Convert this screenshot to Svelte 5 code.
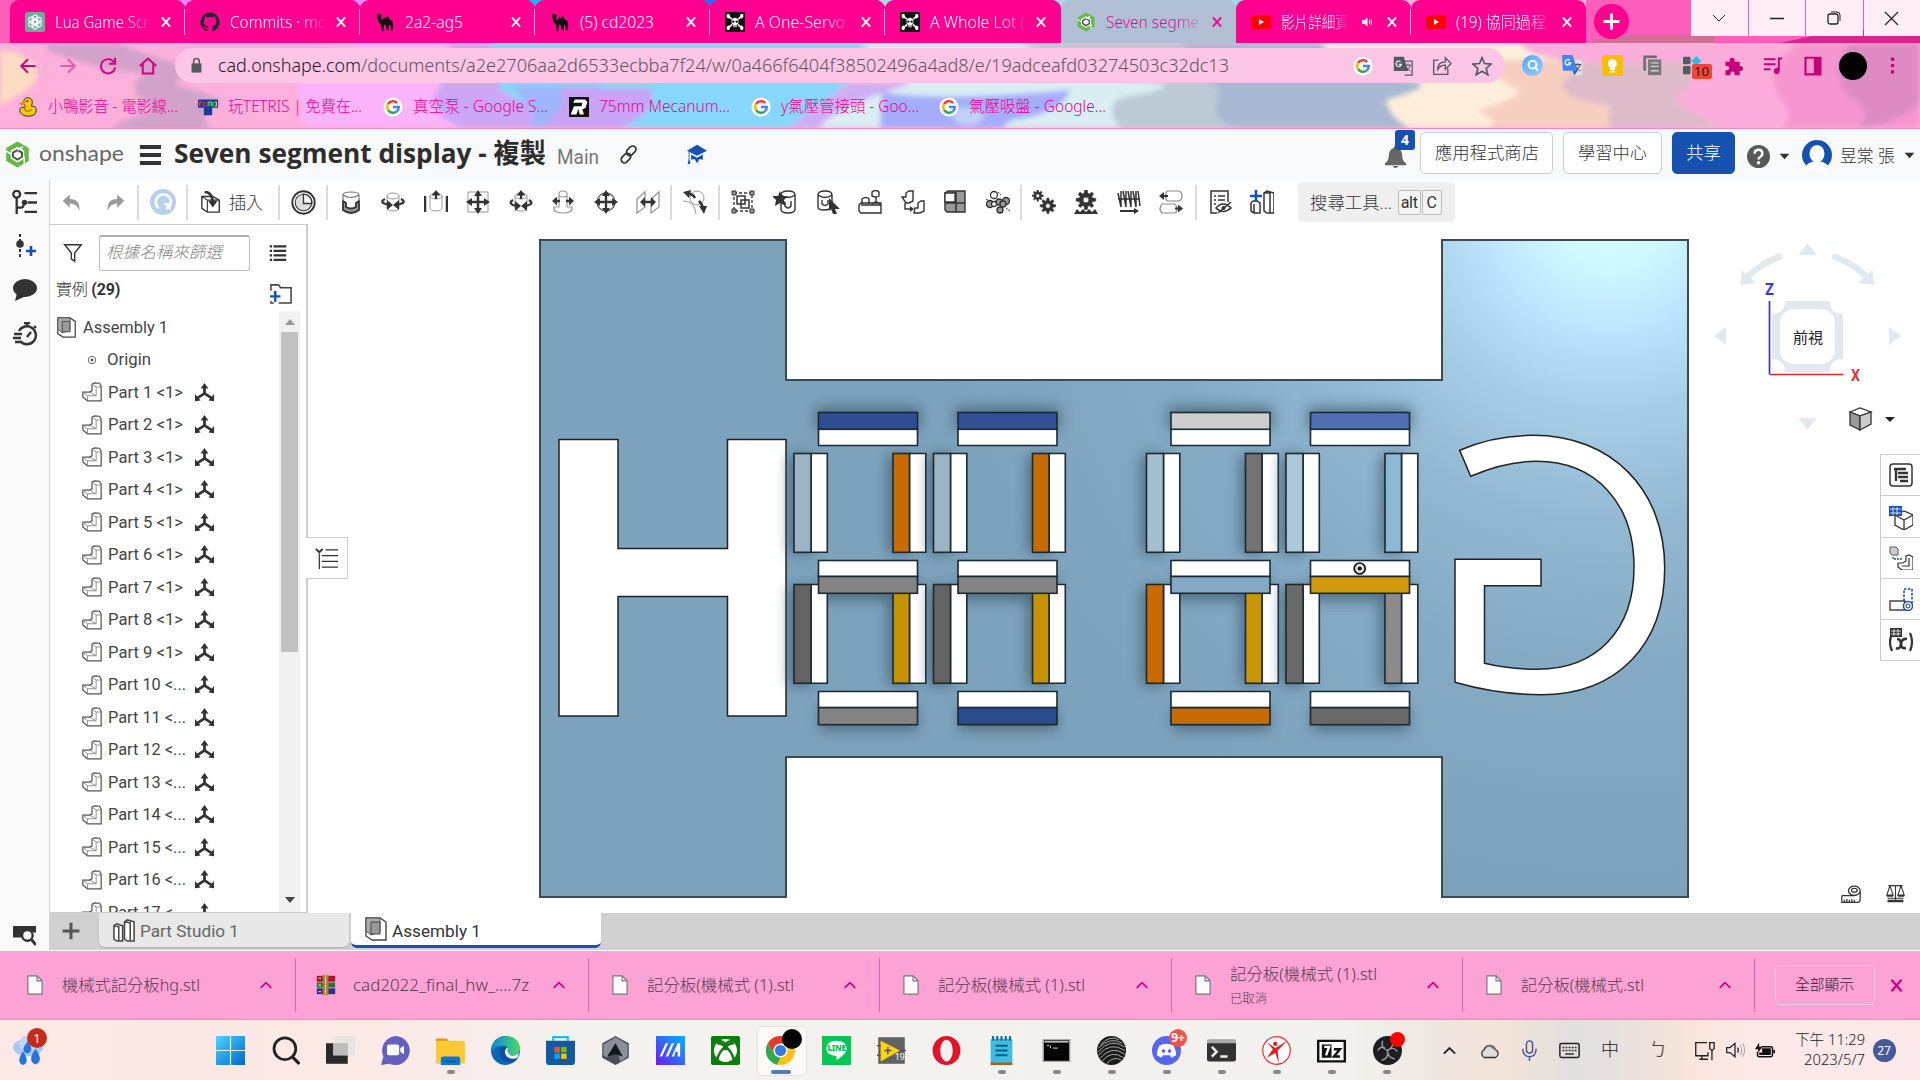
<script>
  const g = '<circle cx="12" cy="12" r="11.5" fill="#fff"/><g fill="none" stroke-width="3"><path d="M17 7.2A7 7 0 0 0 6 8.6" stroke="#ea4335"/><path d="M6 8.6a7 7 0 0 0 0 6.8" stroke="#fbbc05"/><path d="M6 15.4a7 7 0 0 0 10.6 1.8" stroke="#34a853"/><path d="M12 12h7a7 7 0 0 1-2.4 5.2" stroke="#4285f4"/></g>';
  const cyl = '<path d="M6 6v12c0 4 12 4 12 0V6" fill="#fff" stroke="#999"/><ellipse cx="12" cy="6" rx="6" ry="3" fill="#fff" stroke="#999"/>';
  const gear = '<path d="M10.5 0h3l.6 4 2 .8 3-2.200 2.100 2.100-2.200 3 .8 2 4 .6v3l-4 .6-.8 2 2.200 3-2.100 2.100-3-2.200-2 .8-.6 4h-3l-.6-4-2-.8-3 2.200-2.100-2.100 2.200-3-.8-2-4-.6v-3l4-.6.8-2-2.200-3 2.100-2.100 3 2.200 2-.8zM12 8.500a3.500 3.500 0 1 0 0 7 3.500 3.500 0 0 0 0-7z" fill="#333" stroke="#333" stroke-width=".8" fill-rule="evenodd"/>';
  const camel = '<path d="M2 3l4-1 2 2-1 4 2 2 2-5 2 3 2-4 3 5 3 2 1 6-1 5h-2v-5l-2-2-1 7h-2l-1-6-2-1-1 8H8l-1-8-3-3-1-5z" fill="#111"/>';
  const skull = '<path d="M0 0h24v24H0z" fill="#111"/><path d="M4 5l16 14M20 5L4 19" stroke="#fff" stroke-width="1.800"/><path d="M2 3l3-1 1 3-2 3-2-2zM22 3l-3-1-1 3 2 3 2-2zM2 21l3 1 1-3-2-3-2 2zM22 21l-3 1-1-3 2-3 2 2z" fill="#fff"/><path d="M7.500 9q4.500-5 9 0v4.500l-2 1.500v3.500h-5V15l-2-1.500z" fill="#fff" stroke="#111" stroke-width=".8"/><circle cx="10" cy="11.500" r="1.400" fill="#111"/><circle cx="14" cy="11.500" r="1.400" fill="#111"/><path d="M11 16v2M13 16v2" stroke="#111" stroke-width=".8"/>';
  const yt = '<rect y="4" width="24" height="16.500" rx="4" fill="red"/><path d="M9.500 8.500v7l6-3.500z" fill="#fff"/>';
  const shape = '<path d="M12 .5l10 5.700v11.600L12 23.500 2 17.800V6.200z" fill="#63b946"/><path d="M12 5l6 3.500v7L12 19l-6-3.500v-7z" fill="#fff"/><path d="M12 8l4 2.300v3.700L12 16.500 8 14v-3.700z" fill="none" stroke="#555" stroke-width="1.800"/><path d="M2 9l5 3M17 5l-5 3M18 20v-6" stroke="#fff" stroke-width="1.300"/>';
  const part = '<path d="M1 12h8l3-1.500V2.500L15 1l6 .5L23 5v17.500H6.500L1 18z" fill="#fff" stroke="#555" stroke-width="1.500"/><path d="M1 12l5.500 4.500v6M6.500 16.500H17V6h6M12 2.500L17 6M9 12l8 4.500" fill="none" stroke="#888" stroke-width="1.100"/>';
  const asm = '<path d="M2 1h14l6 4v18H8l-6-4z" fill="#fff" stroke="#444" stroke-width="1.400"/><path d="M2 1h14v14l-9 3-5-4z" fill="#aaa" stroke="#555"/><path d="M7 5h9v12H7z" fill="#999" stroke="#444"/>';

  const icons = {
    g, camel, skull, yt, shape, part, asm, gear,
    gpt: '<rect width="24" height="24" rx="3" fill="#74aa9c"/><g fill="none" stroke="#fff" stroke-width="1.300"><ellipse cx="12" cy="9" rx="3.500" ry="5.500"/><ellipse cx="12" cy="9" rx="3.500" ry="5.500" transform="rotate(60 12 12)"/><ellipse cx="12" cy="9" rx="3.500" ry="5.500" transform="rotate(120 12 12)"/><ellipse cx="12" cy="9" rx="3.500" ry="5.500" transform="rotate(180 12 12)"/><ellipse cx="12" cy="9" rx="3.500" ry="5.500" transform="rotate(240 12 12)"/><ellipse cx="12" cy="9" rx="3.500" ry="5.500" transform="rotate(300 12 12)"/></g>',
    github: '<path d="M12 .7a11.500 11.500 0 0 0-3.600 22.400c.6.1.8-.3.8-.6v-2c-3.200.7-3.900-1.500-3.900-1.500-.5-1.300-1.300-1.700-1.300-1.700-1-.7.100-.7.100-.7 1.200.1 1.800 1.200 1.800 1.200 1 1.800 2.700 1.300 3.400 1 .1-.8.4-1.300.7-1.600-2.600-.3-5.300-1.300-5.300-5.700 0-1.300.5-2.300 1.200-3.100-.1-.3-.5-1.500.1-3.100 0 0 1-.3 3.200 1.200a11 11 0 0 1 5.800 0c2.200-1.500 3.200-1.200 3.200-1.200.6 1.600.2 2.800.1 3.100.8.8 1.200 1.800 1.200 3.100 0 4.400-2.700 5.400-5.300 5.700.4.400.8 1.100.8 2.200v3.100c0 .3.200.7.800.6A11.500 11.500 0 0 0 12 .7z" fill="#24292f"/>',
    x: '<path d="M5 4l14 16M19 4L5 20" fill="none" stroke="currentColor" stroke-width="3.200"/>',
    speaker: '<path d="M2 8h5l6-5v18l-6-5H2z" fill="currentColor"/><path d="M17 8v8M20.500 6v12" stroke="currentColor" stroke-width="1.800"/>',
    back: '<path d="M22 12H3M12 3l-9 9 9 9" fill="none" stroke="currentColor" stroke-width="2.600"/>',
    fwd: '<path d="M2 12h19M12 3l9 9-9 9" fill="none" stroke="currentColor" stroke-width="2.600"/>',
    reload: '<path d="M20 7a9.500 9.500 0 1 0 1.500 7M21.500 1v8h-8" fill="none" stroke="currentColor" stroke-width="2.600"/>',
    home: '<path d="M1 12L12 2l11 10M5 9v13h14V9" fill="none" stroke="currentColor" stroke-width="2.600"/>',
    lock: '<path d="M5 9h14v13H5z" fill="#555a60"/><path d="M8 10V6a4 4 0 0 1 8 0v4" fill="none" stroke="#555a60" stroke-width="2.200"/>',
    trans: '<path d="M1 1h12l5 17H1z" fill="#555a60"/><path d="M12 6h11v17H14" fill="none" stroke="#555a60" stroke-width="1.500"/><path d="M9 7a3.200 3.200 0 1 0 1 3H7" fill="none" stroke="#fff" stroke-width="1.400"/><path d="M15 11h7M18 9v2M21 11q-2 5-5 7M16 13q2 4 5 5" fill="none" stroke="#555a60" stroke-width="1.200"/>',
    gtrans: '<path d="M9 6h14v17H13z" fill="#dde1e6"/><path d="M0 0h12l6 18H1z" fill="#4285f4"/><path d="M9 6a3.200 3.200 0 1 0 1 3H7" fill="none" stroke="#fff" stroke-width="1.500"/><path d="M15 11h7M18 9v2M21 11q-2 5-5 7M16 13q2 4 5 5" fill="none" stroke="#555" stroke-width="1.200"/><path d="M12 18h6l-4 5z" fill="#3a56b5"/>',
    share: '<path d="M8 5H2v17h17v-7M7 16q0-9 9-9V2l7 7-7 7v-5q-6 0-9 5z" fill="none" stroke="#555a60" stroke-width="1.600"/>',
    star: '<path d="M12 2l3 7 8 .7-6 5.200 2 7.600-7-4.200-7 4.200 2-7.600-6-5.200L9 9z" fill="none" stroke="#555a60" stroke-width="2"/>',
    mag: '<defs><linearGradient id="mg" x2="1" y2="1"><stop stop-color="#4da9ff"/><stop offset="1" stop-color="#9dcbff"/></linearGradient></defs><circle cx="12" cy="12" r="12" fill="url(#mg)"/><circle cx="12" cy="11" r="4.500" fill="none" stroke="#fff" stroke-width="2.200"/><path d="M15 14l3 4" stroke="#fff" stroke-width="2.200"/>',
    keep: '<rect width="24" height="24" rx="2.500" fill="#fbbc04"/><circle cx="12" cy="10" r="5.200" fill="#fff"/><path d="M9 14h6v3H9zM9 18h6v2H9z" fill="#fff"/>',
    copy: '<path d="M17 2H3v16" fill="none" stroke="#6d6d6d" stroke-width="3"/><path d="M7 5h15v18H7z" fill="#777"/><path d="M10 9h9M10 13h9M10 18h9" stroke="#dcc" stroke-width="1.500"/>',
    grid: '<rect y="1" width="9" height="9" rx="1.500" fill="#555a60"/><rect y="12" width="9" height="10" rx="1.500" fill="#555a60"/><path d="M16 0l6 6-6 6-6-6z" fill="#23bdf2"/>',
    puzzle: '<path d="M3 7h5V5a3 3 0 0 1 6 0v2h6v5h1a3 3 0 0 1 0 6h-1v5h-6v-2a2.500 2.500 0 0 0-5 0v2H3v-6h2a2.500 2.500 0 0 0 0-5H3z" fill="currentColor"/>',
    music: '<path d="M1 4h14M1 10h14M1 16h8M23 3h-4v14" fill="none" stroke="currentColor" stroke-width="2.400"/><circle cx="16.500" cy="18" r="3.500" fill="currentColor"/>',
    panel: '<path d="M3 2h18v20H3z" fill="none" stroke="currentColor" stroke-width="2.500"/><path d="M13 2h8v20h-8z" fill="currentColor"/>',
    dots: '<g fill="currentColor"><circle cx="12" cy="3" r="2.600"/><circle cx="12" cy="12" r="2.600"/><circle cx="12" cy="21" r="2.600"/></g>',
    duck: '<path d="M7 5q1-5 6-4 5 1 4 7l-1 3q6 0 6 4 0 8-9 8-10 0-11-7 0-3 3-4l3 1q2-1 0-3-2-2-1-5z" fill="#f5c800" stroke="#333" stroke-width="1.200"/><path d="M2 7l6-2v4l-5 1z" fill="#f08a00"/><path d="M7 14q4 6 9 1" fill="none" stroke="#a07800" stroke-width="1.500"/><circle cx="11" cy="5" r="1" fill="#111"/>',
    tetris: '<path d="M0 3h24v10h-7v9H7v-9H0z" fill="#173d9b"/><path d="M2 6v5M1 6h4M7 6v5h2M11 6v5" stroke="#f33" stroke-width="1.500"/><path d="M13 11V6h3v5M18 6v5" stroke="#4d4" stroke-width="1.500" fill="none"/><path d="M20 6h2v5h-2" fill="none" stroke="#fc3" stroke-width="1.300"/>',
    rev: '<path d="M0 0h24v24H0z" fill="#111"/><path d="M7 3h12l3 3-2 7-4 2 2 6h-5l-2-7-2 7H2l4-10h9l1-4H5z" fill="#fff"/>',
    link: '<g fill="none" stroke="#333" stroke-width="2"><rect x="9" y="3" width="13" height="8" rx="4" transform="rotate(-45 15 8)"/><rect x="2" y="12" width="13" height="8" rx="4" transform="rotate(-45 8 16)"/></g>',
    cap: '<path d="M0 8l12-7 12 7-12 6z" fill="#1651b0"/><path d="M5 12.500l7 4 7-4V19l-4-1-3 5-3-5-4 1zM2 9v9l-1 6h3l-1-6V9" fill="#1651b0"/>',
    bell: '<path d="M12 1q2 0 2 2 5 2 5 8 0 6 4 8v2H1v-2q4-2 4-8 0-6 5-8 0-2 2-2zM9 22h6q-1 2-3 2t-3-2z" fill="#666"/>',
    help: '<circle cx="12" cy="12" r="12" fill="#595959"/><path d="M8 9q0-4 4-4t4 4q0 2-2 3.300-2 1.200-2 2.700" fill="none" stroke="#fff" stroke-width="2.600"/><circle cx="12" cy="18.500" r="1.800" fill="#fff"/>',
    user: '<circle cx="12" cy="12" r="12" fill="#1651b0"/><ellipse cx="12" cy="11" rx="6" ry="7" fill="#fff"/><path d="M2 24q1-7 10-7t10 7z" fill="#fff"/>',
    caret: '<path d="M3 7h18l-9 10z" fill="#333"/>',
    feature: '<g fill="none" stroke="#333" stroke-width="2.200"><circle cx="4.500" cy="4" r="3.300"/><path d="M4.500 7v16M4.500 17h4q3 0 3-5M12 3h12M15 12h9M12 21h12"/></g><circle cx="12" cy="12" r="2.600" fill="#333"/>',
    addnode: '<path d="M7 0v24" stroke="#333" stroke-width="2" stroke-dasharray="3 2"/><circle cx="7" cy="10" r="3.800" fill="#333"/><path d="M13 17h10M18 12v10" stroke="#1651b0" stroke-width="2.600"/>',
    chat: '<ellipse cx="12" cy="10" rx="12" ry="9" fill="#333"/><path d="M4 15l-2 8 11-5z" fill="#333"/>',
    timer: '<g fill="none" stroke="#333" stroke-width="2.400"><path d="M6 9a9 9 0 1 1 1 10M11 1h6M14 1v4M21 4l2 2M1 12h8M0 16h8M2 20h7M14 15l4-5"/></g>',
    find: '<path d="M0 3h24v7h-3q-3-4-8-2-4 2-4 7H0z" fill="#333"/><circle cx="15" cy="13" r="5.500" fill="none" stroke="#333" stroke-width="2.400"/><path d="M19 17l5 6" stroke="#333" stroke-width="3"/>',
    undo: '<path d="M10 3v5q12 0 11 13-3-8-11-8v5L2 10z" fill="#999"/>',
    redo: '<path d="M14 3v5Q2 8 3 21q3-8 11-8v5l8-8z" fill="#999"/>',
    sync: '<circle cx="12" cy="12" r="12" fill="#b9d0ea"/><path d="M8 17.500a7 7 0 1 1 7 1" fill="none" stroke="#fff" stroke-width="2.200"/><path d="M12 13h7v7z" fill="#fff"/>',
    insert: '<path d="M2 6h12l7 4v13H8l-6-4z" fill="#fff" stroke="#333" stroke-width="1.500"/><path d="M8 10h13M8 10v13M2 6l6 4" fill="none" stroke="#333" stroke-width="1.200"/><path d="M5 1q8 0 9 11" fill="none" stroke="#333" stroke-width="2.800"/><path d="M9 11h10l-5 7z" fill="#333"/>',
    clock: '<circle cx="12" cy="12" r="10.800" fill="#fff" stroke="#333" stroke-width="1.800"/><circle cx="12" cy="12" r="8" fill="#ddd" stroke="#333"/><path d="M12 4v9h8a8 8 0 0 0-8-9z" fill="#fff" stroke="#333" stroke-width="1.300"/>',
    mate1: '<path d="M4 11l3 2v4q5 3 10 0v-4l3-2v9q-8 6-16 0z" fill="#999" stroke="#333" stroke-width="1.800"/><path d="M4 11V5q0-3 8-3t8 3v6M4 5q8 5 16 0" fill="none" stroke="#777" stroke-width="1.200"/>',
    mate2: cyl + '<path d="M4 9Q0 11 2 13l6 2M20 9q4 2 2 4l-6 2" fill="none" stroke="#333" stroke-width="2.300"/><path d="M6 10l6 5-6 5zM18 10l-6 5 6 5z" fill="#333"/>',
    mate3: cyl + '<path d="M1 6v16M23 6v16" stroke="#333" stroke-width="2.500"/><path d="M12 9V3" stroke="#333" stroke-width="2.300"/><path d="M7.500 5.500L12 0l4.500 5.500z" fill="#333"/>',
    mate4: '<path d="M2 2h20v20H2z" fill="none" stroke="#999"/><path d="M12 3v18M3 12h18" stroke="#333" stroke-width="2.500"/><path d="M8 6l4-6 4 6zM8 18l4 6 4-6zM6 8l-6 4 6 4zM18 8l6 4-6 4z" fill="#333"/>',
    mate5: cyl + '<path d="M4 10q-5 3 0 5l4 1M20 10q5 3 0 5l-4 1M12 9V3" fill="none" stroke="#333" stroke-width="2.300"/><path d="M6 11l6 5-6 5zM18 11l-6 5 6 5zM7.500 5.500L12 0l4.500 5.500z" fill="#333"/>',
    mate6: '<path d="M8 4v13H3q-1 6 9 6t9-6h-5V4q0-3-4-3T8 4zM8 6q4 2 8 0" fill="#fff" stroke="#999" stroke-width="1.200"/><path d="M3 11h6M15 11h6" stroke="#333" stroke-width="2.500"/><path d="M6 6.500l-5 4.500 5 4.500zM18 6.500l5 4.500-5 4.500z" fill="#333"/>',
    mate7: '<circle cx="12" cy="12" r="9" fill="none" stroke="#555" stroke-width="1.300"/><path d="M12 2v20M2 12h20" stroke="#333" stroke-width="2.300"/><path d="M8 6l4-6 4 6zM8 18l4 6 4-6zM6 8l-6 4 6 4zM18 8l6 4-6 4z" fill="#333"/>',
    mate8: '<path d="M1 9l8-7v15l-8 6zM15 9l8-7v15l-8 6z" fill="#fff" stroke="#999" stroke-width="1.300"/><path d="M6 12h12" stroke="#333" stroke-width="2.500"/><path d="M9 7l-5 5 5 5zM15 7l5 5-5 5z" fill="#333"/>',
    tan: '<circle cx="14" cy="8" r="7" fill="none" stroke="#999"/><path d="M0 11q12 0 13 13" fill="none" stroke="#999"/><path d="M4 3q6 1 8 5M16 11q4 4 4 8" fill="none" stroke="#333" stroke-width="2.500"/><path d="M0 2l8-2-2 8zM24 16l-8 0 5 8z" fill="#333"/>',
    group: '<path d="M3 3h18v18H3z" fill="none" stroke="#333" stroke-width="1.300" stroke-dasharray="3 2"/><path d="M1 1h4v4H1zM19 1h4v4h-4zM1 19h4v4H1zM19 19h4v4h-4z" fill="#999" stroke="#333"/><path d="M10 10h8v8h-8zM6 6h8v8H6z" fill="#fff" stroke="#333" stroke-width="1.500"/>',
    favmate: '<path d="M8 5v14q0 4 7 4t7-4V5q0-4-7-4T8 5zM8 5q7 5 14 0M12 12v4q3 4 6 0v-5" fill="#fff" stroke="#333" stroke-width="1.400"/><path d="M7 1l2 5 6 0-4 4 2 6-6-3-5 3 1-6-4-4 6 0z" fill="#333"/>',
    selmate: '<path d="M2 5v12q0 3 6 3t8-3V5q0-4-7-4T2 5zM2 5q7 5 14 0M6 10v4q3 3 6 0v-4" fill="#fff" stroke="#333" stroke-width="1.400"/><path d="M13 8l11 11h-5l2 5h-4l-2-5-2 2z" fill="#333"/>',
    fixt: '<path d="M1 15l2-2h20v10H3l-2-2zM3 15h20M4 14V9q4-3 7 0v5M14 14q4-4 8 0M18 12V7M14 6V2q4-3 7 0v4q-3 2-7 0z" fill="#fff" stroke="#333" stroke-width="1.400"/>',
    repl: '<path d="M1 7h4V3l3-2h4v10l-4 2H5zM14 18h3v-5l3-2h3v10l-4 2h-6z" fill="#fff" stroke="#333" stroke-width="1.400"/><path d="M4 13v6h6" fill="none" stroke="#333" stroke-width="1.400"/><path d="M9 16l4 3-4 3z" fill="#333"/>',
    blocks: '<path d="M2 3l3-2h17v21H4l-2-2z" fill="#999" stroke="#333" stroke-width="1.400"/><path d="M2 3h10v9H2z" fill="#fff" stroke="#333" stroke-width="1.300"/><path d="M13 2v20M2 13h20" stroke="#333" stroke-width="1.500"/>',
    chain: '<g fill="#999" stroke="#333" stroke-width="1.300"><circle cx="4" cy="14" r="3.500"/><circle cx="14" cy="20" r="3"/><circle cx="20" cy="11" r="3.500"/><circle cx="8" cy="5" r="3.500" fill="#fff"/><circle cx="13" cy="12" r="3"/><circle cx="8" cy="14" r="2.500" fill="#fff"/><circle cx="17" cy="14" r="3"/></g><path d="M0 9l5 3M20 18l4 3M12 2l3 3" stroke="#333" stroke-dasharray="2 1"/>',
    gears: '<g transform="translate(0 0) scale(.48)">' + gear + '</g><g transform="translate(8 8) scale(.66)">' + gear + '</g>',
    gearrack: '<g transform="translate(2 0) scale(.83)">' + gear + '</g><path d="M0 24l3-5 3 3 3-3 3 3 3-3 3 3 3-3 3 5z" fill="#333"/>',
    screw: '<path d="M1 3l3 14M6 1l3 16M11 1l3 16M16 1l3 16M21 1l2 15M4 1v16M9 1v16M14 1v16M19 1v16M1 9h22" fill="none" stroke="#333" stroke-width="1.500"/><path d="M3 21h14" stroke="#333" stroke-width="2"/><path d="M17 18l5 3-5 3z" fill="#333"/>',
    rel: '<path d="M8 1h12q3 1 3 5t-3 5H8q-3-5 0-10zM3 14h12q3 1 3 5t-3 4H3q-4-4 0-9z" fill="#fff" stroke="#888" stroke-width="1.200"/><path d="M4 6h5M16 18.500h5" stroke="#333" stroke-width="2"/><path d="M5 2v8L0 6zM19 14.500v8l5-4z" fill="#333"/>',
    hide: '<path d="M20 12V1H3v22h6M6 6h2M10 6h7M6 10h2M10 10h7M6 14h2" fill="none" stroke="#333" stroke-width="1.500"/><path d="M8 18q7-8 15 0-8 7-15 0zM10 23L23 12" fill="none" stroke="#333" stroke-width="1.600"/><circle cx="15.500" cy="18" r="2" fill="#333"/>',
    stud2: '<path d="M1 13v8l3 2h6V13l-3-2H3zM4 14v9M14 3l3-2 7 2v20h-7l-3-2zM14 3h6v20" fill="#fff" stroke="#333" stroke-width="1.500"/><path d="M0 6h12M6 0v12" stroke="#1651b0" stroke-width="2.600"/>',
    studio: '<path d="M1 7l3-2 6 2v16H4l-3-2zM1 7l5 1v15M12 3l3-2 7 2v20h-7l-3-2zM12 3l6 1v19" fill="#fff" stroke="#444" stroke-width="1.600"/>',
    funnel: '<path d="M2 2h20l-8 10v10l-4-3v-7z" fill="none" stroke="#333" stroke-width="1.700"/>',
    list: '<path d="M1 3h3M6 3h17M1 9h3M6 9h17M1 15h3M6 15h17M1 21h3M6 21h17" stroke="#333" stroke-width="3"/>',
    folder: '<path d="M2 9V3h8l2 3h11v16H10M2 20v2h3" fill="none" stroke="#444" stroke-width="1.600"/><path d="M1 15h11M6.500 9.500v11" stroke="#1651b0" stroke-width="2.600"/>',
    origin: '<circle cx="12" cy="12" r="9" fill="none" stroke="#555" stroke-width="2.200"/><circle cx="12" cy="12" r="3.500" fill="#555"/>',
    tri: '<path d="M12 4v10M12 13l-9 6M12 13l9 6" stroke="#333" stroke-width="3.500"/><path d="M7 7l5-7 5 7zM0 23V14l7 8zM24 23V14l-7 8z" fill="#333"/>',
    expand: '<path d="M11 3h13M7 9h17M7 15h17M7 21h17M4.500 7v16" stroke="#333" stroke-width="1.300"/><path d="M1 2l3.500 3.500L8 2" fill="none" stroke="#333" stroke-width="2"/>',
    plus: '<path d="M12 2v20M2 12h20" stroke="currentColor" stroke-width="3.600"/>',
    r1: '<rect x="1" y="1" width="22" height="22" rx="3" fill="none" stroke="#333" stroke-width="1.500"/><path d="M5 6h12M7 6v12M9 10h10M9 14h10M11 18h8" stroke="#333" stroke-width="2.400"/>',
    r2: '<path d="M6 9l9-4 9 4v10l-9 5-9-5zM6 9l9 5 9-5M15 14v10" fill="#fff" stroke="#333" stroke-width="1.300"/><path d="M0 0h13v10H0z" fill="#1651b0"/><path d="M1 3h11M1 7h11M4 1v8M8 1v8" stroke="#c9dcf5"/>',
    r3: '<path d="M1 1h6l2 2v6H3L1 7z" fill="#ccc" stroke="#555"/><path d="M4 11v2h9" fill="none" stroke="#1651b0" stroke-width="1.300" stroke-dasharray="2 1"/><path d="M9 17h5l3-2V10l3-1 4 2v13H13l-4-3zM13 20h7V12" fill="#fff" stroke="#333" stroke-width="1.200"/>',
    r4: '<path d="M15 14V2h8v17" fill="none" stroke="#1651b0" stroke-width="1.600" stroke-dasharray="2.500 1.500"/><path d="M1 14h15v9H1z" fill="#fff" stroke="#444" stroke-width="1.400"/><circle cx="19" cy="19" r="4.500" fill="#fff" stroke="#1651b0" stroke-width="1.500"/><circle cx="19" cy="19" r="2" fill="none" stroke="#333"/>',
    r5: '<path d="M3 6q-4 8 0 17M21 5q4 9 0 18" fill="none" stroke="#333" stroke-width="2.200"/><path d="M7 20q4 2 5-4t6-5M8 11q4 0 4 5t5 4" fill="none" stroke="#333" stroke-width="2.600"/><path d="M1 0h12v9H1z" fill="#333"/><path d="M2 3h10M2 6h10M5 1v7M9 1v7" stroke="#fff" stroke-width=".8"/>',
    file: '<path d="M3.500 1h11l6 6v16h-17z" fill="#fafafa" stroke="#777" stroke-width="1.400"/><path d="M14.500 1v6h6" fill="none" stroke="#777" stroke-width="1.400"/>',
    rar: '<path d="M1 1h22v7H1z" fill="#a31528"/><path d="M1 9h22v6H1z" fill="#1c7a2c"/><path d="M1 16h22v7H1z" fill="#2b2e94"/><path d="M8 0h7v24H8z" fill="#b07830"/><path d="M11.500 0v24" stroke="#eec" stroke-width="1.500" stroke-dasharray="2 1"/><path d="M3 4h3M3 12h3M3 20h3" stroke="#dfdf80" stroke-width="1.500"/>',
    up: '<path d="M3 17l9-9 9 9" fill="none" stroke="currentColor" stroke-width="3"/>',
    weather: '<ellipse cx="12" cy="10" rx="12" ry="7" fill="#a9c8f2"/><circle cx="12" cy="7" r="7" fill="#bcd5f8"/><path d="M12 5q-7 8-.5 10 6-2 .5-10zM8 13q-6 9 0 11 6-2 0-11zM18 11q-7 10 0 12.500 7-2.500 0-12.500z" fill="#2774dc"/>',
    win: '<defs><linearGradient id="wg" x2="1" y2="1"><stop stop-color="#4fd4ff"/><stop offset="1" stop-color="#0068c9"/></linearGradient></defs><path d="M0 0h11.500v11.500H0zM12.500 0H24v11.500H12.500zM0 12.500h11.500V24H0zM12.500 12.500H24V24H12.500z" fill="url(#wg)"/>',
    search: '<circle cx="11.500" cy="10.500" r="9" fill="none" stroke="#222" stroke-width="2.300"/><path d="M17.500 17l6 6" stroke="#222" stroke-width="2.600"/>',
    task: '<path d="M0 6h18v17H0z" fill="#2a2a2a"/><path d="M6 0h18v16H6z" fill="#e4e4e4" opacity=".88"/><path d="M6 6h12v10H6z" fill="#bcbcbc"/>',
    meet: '<path d="M12 0a12 12 0 1 1-5 23l-7 1 2-7A12 12 0 0 1 12 0z" fill="#6460bd"/><rect x="5" y="7" width="10" height="9" rx="1.500" fill="#fff"/><path d="M16 10l3-2v7l-3-2z" fill="#fff"/>',
    folderw: '<path d="M0 2h9l3 4H0z" fill="#d99a09"/><rect y="4" width="24" height="19" rx="1.500" fill="#fdc936"/><path d="M4 24v-5q0-2 2-2h12q2 0 2 2v5z" fill="#1276cf"/><path d="M7 21h10" stroke="#0a4a8a"/>',
    edge: '<defs><linearGradient id="eg" x2="1"><stop stop-color="#0c8bd8"/><stop offset="1" stop-color="#4dd964"/></linearGradient></defs><circle cx="12" cy="12" r="12" fill="#0c66b8"/><path d="M1 8Q5 0 13 0q11 1 11 11-1 5-7 5-4 0-3-4 0-4-5-4-6 0-8 5z" fill="url(#eg)"/><path d="M9 9q-4 5 0 10 4 4 10 2l3-3q-5 2-9-1-4-4 0-8-2-1-4 0z" fill="#0f4f9f"/><path d="M13 10q-3 3 0 7 4 3 9 1l1-4q-5 4-8 1-2-2-1-5z" fill="#f4f0ee"/>',
    store: '<path d="M6 4V1h12v3" fill="none" stroke="#29b8ec" stroke-width="1.800"/><path d="M0 4h24v17q0 3-3 3H3q-3 0-3-3z" fill="#12599d"/><path d="M7 9h4.500v4.500H7z" fill="#f25022"/><path d="M12.500 9H17v4.500h-4.500z" fill="#7fba00"/><path d="M7 14.500h4.500V19H7z" fill="#00a4ef"/><path d="M12.500 14.500H17V19h-4.500z" fill="#ffb900"/>',
    armoury: '<path d="M12 0l11 6v12l-11 6L1 18V6z" fill="#4a4e55"/><path d="M12 1l10 6v10l-6 4-4-14-7 11-3-2V7z" fill="#8b9098"/><path d="M12 6l6 11-6-2-7 2z" fill="#16181b"/>',
    myasus: '<defs><linearGradient id="ag" x1="0" y1="1" x2="1" y2="0"><stop stop-color="#6b1af0"/><stop offset="1" stop-color="#00b4ff"/></linearGradient></defs><path d="M0 0h24v24H0z" fill="url(#ag)"/><path d="M3 17L8 6h2L5 17zM8 17l5-11h2l-5 11zM13 17l5-11h2v11h-2v-4h-2l-1 4z" fill="#fff"/>',
    xbox: '<rect width="24" height="24" rx="1.500" fill="#107c10"/><circle cx="12" cy="12" r="9.500" fill="#fff"/><path d="M6 4q4 0 6 3 2-3 6-3M5 20Q7 12 12 9q5 3 7 11M5 6q5 0 7 4 2-4 7-4" fill="none" stroke="#107c10" stroke-width="2"/>',
    chrome: '<circle cx="12" cy="12" r="12" fill="#fbc116"/><path d="M12 0a12 12 0 0 1 10.400 6H12L6.800 15 1.600 6A12 12 0 0 1 12 0z" fill="#e33b2e"/><path d="M1.600 6l5.200 9 5.200 3-3 5.700A12 12 0 0 1 1.600 6z" fill="#2da94f"/><circle cx="12" cy="12" r="5.800" fill="#fff"/><circle cx="12" cy="12" r="4.600" fill="#3a77e3"/>',
    line: '<path d="M0 0h24v24H0z" fill="#06c755"/><path d="M12 4q8 0 8.500 6.500Q20 15 12 20v-3.500Q4 16 3.500 10.500 4 4 12 4z" fill="#fff"/>',
    labview: '<path d="M1 1h22v22H1z" fill="#606266"/><path d="M3 4v17l16-9z" fill="#ffd400"/><path d="M0 8h3M0 16h3M19 12h5M6 12h6M9 9v6" stroke="#555" stroke-width="1.300"/>',
    opera: '<ellipse cx="12" cy="12" rx="11.500" ry="12" fill="#e3132c"/><ellipse cx="12" cy="12" rx="5.200" ry="9" fill="#f5f1ef"/>',
    notepad: '<rect x="3" y="2" width="18" height="21" rx="1.500" fill="#3fbde0"/><path d="M3 22h18v2H3z" fill="#b05a12"/><path d="M7 8h10M7 12h10M7 16h10" stroke="#0d5f85" stroke-width="1.600"/><path d="M5 0v4M8.500 0v4M12 0v4M15.500 0v4M19 0v4" stroke="#135f80" stroke-width="1.500"/>',
    cmd: '<path d="M1 3h22v18H1z" fill="#050505" stroke="#aaa" stroke-width="1.200"/><path d="M2 4h20v1.500H2z" fill="#bbb"/><path d="M4 8h2M7 8v2M9 10h4" stroke="#ddd" stroke-width=".8"/>',
    sphere: '<circle cx="12" cy="12" r="12" fill="#1c1c1c"/><path d="M3 7q8-8 15-4M1 10q10-10 20-4M1 13q10-12 22-4M1 16q10-12 22-4M2 19q10-12 21-4M4 21q8-10 18-3M8 23q6-7 12-3" fill="none" stroke="#aaa" stroke-width=".8"/>',
    discord: '<circle cx="12" cy="12" r="12" fill="#5865f2"/><path d="M6 8q6-3 12 0 2 4 2 8l-4 2-1-2H9l-1 2-4-2q0-4 2-8z" fill="#fff"/><circle cx="9.500" cy="12.500" r="1.500" fill="#5865f2"/><circle cx="14.500" cy="12.500" r="1.500" fill="#5865f2"/>',
    term: '<rect y="3" width="24" height="18" rx="1.500" fill="#333"/><path d="M0 3h24v3H0z" fill="#aaa"/><path d="M4 9l4 4-4 4M11 17h6" fill="none" stroke="#eee" stroke-width="2"/>',
    gym: '<circle cx="12" cy="12" r="11.400" fill="#fff" stroke="#e33" stroke-width="1"/><path d="M4 5l7 5 10-6-8 8 1 11-3-9-7 4 5-7z" fill="#d22"/><circle cx="11" cy="6.500" r="1.800" fill="#d22"/>',
    zip: '<path d="M1 4h22v17H1z" fill="#fff" stroke="#111" stroke-width="2"/><path d="M4 7h8v11H4z" fill="#111"/><path d="M6 9h4l-2.500 7" fill="none" stroke="#fff" stroke-width="2"/><path d="M14 11h5l-5 6h5" fill="none" stroke="#111" stroke-width="2"/>',
    obs: '<circle cx="12" cy="12" r="12" fill="#1d1d22"/><path d="M12 12q-6-2-4-8M12 12q5-4 8 1M12 12q1 7-5 8M4 12q2-4 6-2M17 5q-1 5-5 7M18 19q-6-1-6-7" fill="none" stroke="#999" stroke-width="1.200"/>',
    cloud: '<path d="M6 20a5 5 0 0 1 0-9 7 7 0 0 1 13 0 5 5 0 0 1 0 9z" fill="#ddd" stroke="#333" stroke-width="1.500"/><path d="M4 12q4-6 9-4l8 6q-2-7-8-9-6 0-9 7z" fill="#777"/>',
    mic: '<rect x="8.500" y="1" width="7" height="14" rx="3.500" fill="none" stroke="#3f4f9e" stroke-width="1.600"/><path d="M4.500 10v2q1 7 7.500 7t7.500-7v-2M12 19v5" fill="none" stroke="#3f4f9e" stroke-width="1.600"/>',
    keys: '<rect x="1" y="4" width="22" height="16" rx="2" fill="none" stroke="#222" stroke-width="1.700"/><path d="M4 8.500h16M4 12h16" stroke="#222" stroke-width="1.800" stroke-dasharray="2 1.500"/><path d="M7 16h10" stroke="#222" stroke-width="1.600"/>',
    monitor: '<path d="M15 3H2v15h14v-4M6 22h10M9 18v4M18 10V3h5v7l-2.500 2zM20.500 12v11" fill="none" stroke="#222" stroke-width="1.500"/>',
    sound: '<path d="M2 9h4l6-5v16l-6-5H2z" fill="none" stroke="#222" stroke-width="1.500"/><path d="M15 9q2 3 0 6" fill="none" stroke="#222" stroke-width="1.500"/><path d="M18 6q4 6 0 12M21 4q5 8 0 16" fill="none" stroke="#aaa" stroke-width="1.300"/>',
    batt: '<path d="M8 8h11q2 0 2 2v8q0 2-2 2H5q-2 0-2-2v-4" fill="none" stroke="#111" stroke-width="1.800"/><path d="M8 10h11v8H5v-3h4z" fill="#111"/><path d="M22 12h2v4h-2zM5 3L0 11h4l-1 5 6-8H5z" fill="#111"/>',
    tape: '<path d="M1 14h10q5 0 8-1M1 14v8h19q3 0 3-4V9M4 19v3M7 18v4M10 19v3M13 18v4M16 19v3" fill="none" stroke="#333" stroke-width="1.500"/><ellipse cx="16" cy="8" rx="7" ry="5.500" fill="#fff" stroke="#333" stroke-width="1.600"/><ellipse cx="16" cy="7.500" rx="3.500" ry="2.300" fill="none" stroke="#333" stroke-width="1.500"/>',
    scale: '<path d="M3 2h18M12 2v18M5 2L1 14h8L5 2M19 2l-4 12h8L19 2M2 18h20" fill="none" stroke="#333" stroke-width="1.400"/><path d="M1 14h8v2H1zM15 14h8v2h-8zM2 20h20v3H2z" fill="#333"/>'
  };

  const tabs = [
    { i: 'gpt', t: 'Lua Game Scr', w: 94, fade: 1 },
    { i: 'github', t: 'Commits · mc', w: 95, fade: 1 },
    { i: 'camel', t: '2a2-ag5', w: 58 },
    { i: 'camel', t: '(5) cd2023', w: 74 },
    { i: 'skull', t: 'A One-Servo', w: 90, fade: 1 },
    { i: 'skull', t: 'A Whole Lot (', w: 95, fade: 1 },
    { i: 'shape', t: 'Seven segme', w: 93, fade: 1, active: true },
    { i: 'yt', t: '影片詳細資', w: 68, fade: 1, audio: true },
    { i: 'yt', t: '(19) 協同過程', w: 90, fade: 1 }
  ];
  const bookmarks = [
    { i: 'duck', t: '小鴨影音 - 電影線...', w: 130 },
    { i: 'tetris', t: '玩TETRIS | 免費在...', w: 134 },
    { i: 'g', t: '真空泵 - Google S...', w: 135 },
    { i: 'rev', t: '75mm Mecanum...', w: 131 },
    { i: 'g', t: 'y氣壓管接頭 - Goo...', w: 138 },
    { i: 'g', t: '氣壓吸盤 - Google...', w: 137 }
  ];
  const tools1 = ['mate1', 'mate2', 'mate3', 'mate4', 'mate5', 'mate6', 'mate7', 'mate8'];
  const tools2 = ['group', 'favmate', 'selmate', 'fixt', 'repl', 'blocks', 'chain'];
  const tools3 = ['gears', 'gearrack', 'screw', 'rel'];
  const parts = Array.from({ length: 17 }, (_, k) => (k < 9 ? `Part ${k + 1} <1>` : `Part ${k + 1} <...`));
  const files = [
    { i: 'file', t: '機械式記分板hg.stl', w: 138 },
    { i: 'rar', t: 'cad2022_final_hw_....7z', w: 176 },
    { i: 'file', t: '記分板(機械式 (1).stl', w: 147 },
    { i: 'file', t: '記分板(機械式 (1).stl', w: 147 },
    { i: 'file', t: '記分板(機械式 (1).stl', w: 147, sub: '已取消' },
    { i: 'file', t: '記分板(機械式.stl', w: 123 }
  ];
  const apps = [
    { i: 'win' }, { i: 'search' }, { i: 'task' }, { i: 'meet' }, { i: 'folderw', run: 1 }, { i: 'edge' }, { i: 'store' },
    { i: 'armoury' }, { i: 'myasus' }, { i: 'xbox' }, { i: 'chrome', on: 1, blob: '#000' }, { i: 'line', label: 'LINE' },
    { i: 'labview', num: '19' }, { i: 'opera' }, { i: 'notepad', run: 1 }, { i: 'cmd', run: 1 }, { i: 'sphere', run: 1 },
    { i: 'discord', run: 1, count: '9+' }, { i: 'term', run: 1 }, { i: 'gym', run: 1 }, { i: 'zip', run: 1 }, { i: 'obs', run: 1, blob: '#f00' }
  ];

  // Digit columns: x offset, then fills for top, upper-left, upper-right, middle, lower-left, lower-right, bottom.
  const digits = [
    { dx: 0, c: ['#2f4d90', '#9bb4c4', '#c76c04', '#848484', '#636363', '#c69103', '#848484'] },
    { dx: 139.500, c: ['#325093', '#9bb4c4', '#c76c04', '#848484', '#636363', '#c69103', '#2c4a8e'] },
    { dx: 352.500, c: ['#cdcdcf', '#a5bfcf', '#737373', '#82aac5', '#c76c04', '#c89505', '#c76c04'] },
    { dx: 492, c: ['#5170b3', '#adc8d8', '#8db8d5', '#d19b0c', '#696969', '#8b8b8b', '#696969'] }
  ];
</script>

{#snippet icon(name, size)}
  <svg class="ic" viewBox="0 0 24 24" width={size} height={size}>{@html icons[name]}</svg>
{/snippet}

{#snippet txt(s, w, size)}
  <svg class="tx" width={w} height={size * 1.4}><text x="0" y={size * 1.06} font-size={size} textLength={w} lengthAdjust="spacingAndGlyphs">{s}</text></svg>
{/snippet}

<div class="screen">
  <header class="chrome">
    <svg class="paper" viewBox="0 0 1920 128" width="1920" height="128">
      <defs><filter id="soft"><feGaussianBlur stdDeviation="2.5" /></filter></defs>
      <path d="M0 0h1920v128H0z" fill="#fdb0dc" />
      <g filter="url(#soft)">
        <path d="M0 50q18 0 32 12 12 12-2 26-14 8-30 18z" fill="#fddcc4" />
        <path d="M47 43h70q50 20 82 25-30 14-20 18 40 10 44 18-30 10-10 26H113q0-8 30-16 14-6-6-18-8-16 10-22-60-6-100-24z" fill="#d3a2ca" />
        <path d="M170 43h160q-20 26-90 20-40-6-70-20z" fill="#f7aadf" />
        <path d="M360 43h160l-20 85H310q-16-10-5-22-20-20 10-36z" fill="#fbb3fa" />
        <path d="M450 43h60l40 85h-90q-40-20-20-40z" fill="#cda6f7" />
        <path d="M490 43h420l-70 45-40 40H560q-20-10-10-20-60-10-50-34z" fill="#87d7fc" />
        <path d="M510 86h90q-20 20-10 42h-60q10-20-20-42z" fill="#9fb6fa" />
        <path d="M560 88h90q10 24-30 40h-80q30-20 20-40z" fill="#c8a3f6" />
        <path d="M848 84h70l-70 44h-60z" fill="#cfadf5" />
        <path d="M860 43h320v85H820q10-20 90-44z" fill="#d9edf3" />
        <path d="M882 92q60 10 188-2-8 24-58 30l-10 8H880z" fill="#a5adfa" />
        <ellipse cx="968" cy="116" rx="16" ry="9" fill="#c3d0fa" />
        <path d="M1020 43h230v85h-130q-16-20 0-30 60-10 40-14-80-10-140-41z" fill="#bccad5" />
        <path d="M1180 43h240v85h-180q-36-4-20-36-20-20-40-49z" fill="#a9b9d3" />
        <path d="M1320 43h240v85h-150q-20-10-24-28 60-16 20-20-60-10-86-37z" fill="#fdeedb" />
        <path d="M1500 60h150v68h-160q10-8-14-18 40-10 44-20-30-10-20-30z" fill="#f7cfc0" />
        <path d="M1600 50h120v78h-110q-4-14 2-22-50-6-50-22 20-20 38-34z" fill="#debbc9" />
        <path d="M1520 43h400v85h-200l-48-28q20-12 30-40-170 10-182-17z" fill="#fcaddb" />
        <path d="M1800 43h120v85h-140q16-12 0-30-20-30 20-55z" fill="#f596d0" />
        <path d="M1850 43h70v60q-20 20-60 25 14-20-12-32-20-24 2-53z" fill="#df8bc3" />
      </g>
      <path d="M0 0h1061v43H0z" fill="#f51295" />
      <path d="M0 0h40v43H0z" fill="#ff5fb9" />
      <path d="M1586 0h334v43h-334z" fill="#fc5eb9" />
      <path d="M1590 43q20-9 50-8h75v8z" fill="#cf7098" />
      <path d="M1780 43l60-13h80v13z" fill="#d9268f" />
      <path d="M178 0h16l-8 7zM353 0h16l-8 7z" fill="#e58bff" />
      <path d="M528 0h16l-8 7z" fill="#1cb5fd" />
      <path d="M703 0h16l-8 7z" fill="#3366ff" />
      <path d="M878 0h16l-8 7zM1054 0h190v12h-190z" fill="#a5d9e8" />
    </svg>
    <div class="strip">
      {#each tabs as t, k}
        <div class="tab" class:active={t.active} class:line={k < 8 && k !== 5 && k !== 6}>
          {@render icon(t.i, 20)}
          <div class="title" class:fade={t.fade} class:short={t.audio}>{@render txt(t.t, t.w, 15.500)}</div>
          {#if t.audio}<span class="audio">{@render icon('speaker', 12)}</span>{/if}
          {@render icon('x', 14)}
        </div>
      {/each}
      <div class="new">{@render icon('plus', 19)}</div>
      <div class="wb">
        <div><svg width="16" height="16"><path d="M2 5l6 6 6-6" fill="none" stroke="#222" /></svg></div>
        <div><svg width="14" height="14"><path d="M0 7.500h14" stroke="#222" stroke-width="1.500" /></svg></div>
        <div><svg width="14" height="14" viewBox="0 0 14 14"><rect x="1" y="3" width="10" height="10" rx="2" fill="none" stroke="#222" stroke-width="1.300" /><path d="M4 1h6q3 0 3 3v6" fill="none" stroke="#222" /></svg></div>
        <div><svg width="15" height="15"><path d="M1 1l13 13M14 1L1 14" stroke="#222" stroke-width="1.200" /></svg></div>
      </div>
    </div>
    <div class="nav">
      <div class="navbtns">
        <span>{@render icon('back', 18)}</span><span class="dim">{@render icon('fwd', 18)}</span><span>{@render icon('reload', 18)}</span><span>{@render icon('home', 18)}</span>
      </div>
      <div class="pill">
        {@render icon('lock', 17)}
        <div class="url"><b>{@render txt('cad.onshape.com', 143, 19)}</b>{@render txt('/documents/a2e2706aa2d6533ecbba7f24/w/0a466f6404f38502496a4ad8/e/19adceafd03274503c32dc13', 868, 19)}</div>
        <div class="pillic">{@render icon('g', 20)}{@render icon('trans', 20)}{@render icon('share', 20)}{@render icon('star', 20)}</div>
      </div>
      <div class="ext">
        {#each ['mag', 'gtrans', 'keep', 'copy'] as e}<span>{@render icon(e, 21)}</span>{/each}
        <span class="cnt">{@render icon('grid', 20)}<i>10</i></span>
        {#each ['puzzle', 'music', 'panel'] as e}<span>{@render icon(e, 20)}</span>{/each}
        <span><em></em></span><span>{@render icon('dots', 17)}</span>
      </div>
    </div>
    <div class="marks">
      {#each bookmarks as b}<div class="mark">{@render icon(b.i, 20)}{@render txt(b.t, b.w, 15.500)}</div>{/each}
    </div>
  </header>

  <div class="apphead">
    <div class="brand">{@render icon('shape', 27)}<span class="onshape">{@render txt('onshape', 85, 22)}</span></div>
    <div class="burger"><i></i><i></i><i></i></div>
    <div class="doc">{@render txt('Seven segment display - 複製', 372, 27.500)}</div>
    <div class="main">{@render txt('Main', 42, 19.500)}</div>
    <div class="lnk">{@render icon('link', 20)}</div>
    <div class="capi">{@render icon('cap', 20)}</div>
    <div class="right">
      <div class="bell">{@render icon('bell', 23)}<b>4</b></div>
      <div class="btn b1">{@render txt('應用程式商店', 104, 17.500)}</div>
      <div class="btn b2">{@render txt('學習中心', 69, 17.500)}</div>
      <div class="btn b3">{@render txt('共享', 35, 17.500)}</div>
      <div class="help">{@render icon('help', 23)}{@render icon('caret', 13)}</div>
      <div class="me">{@render icon('user', 30)}{@render txt('昱棠 張', 55, 17.500)}{@render icon('caret', 13)}</div>
    </div>
  </div>

  <div class="body">
    <aside class="rail">
      <div>{@render icon('feature', 25)}</div><div>{@render icon('addnode', 24)}</div><div>{@render icon('chat', 24)}</div><div>{@render icon('timer', 24)}</div>
      <div class="last">{@render icon('find', 23)}</div>
    </aside>
    <div class="work">
      <div class="tools">
        <div class="cell">{@render icon('undo', 21)}</div><div class="cell redo">{@render icon('redo', 21)}</div><hr />
        <div class="cell s">{@render icon('sync', 26)}</div><hr />
        <div class="ins">{@render icon('insert', 22)}{@render txt('插入', 34, 17.500)}</div><hr />
        <div class="cell s">{@render icon('clock', 25)}</div><hr />
        {#each tools1 as t}<div class="cell">{@render icon(t, 24)}</div>{/each}<hr />
        <div class="cell s">{@render icon('tan', 24)}</div><hr />
        {#each tools2 as t}<div class="cell">{@render icon(t, 24)}</div>{/each}<hr />
        {#each tools3 as t}<div class="cell">{@render icon(t, 24)}</div>{/each}<hr class="wide" />
        <div class="cell">{@render icon('hide', 24)}</div><div class="cell">{@render icon('stud2', 24)}</div>
        <div class="find">{@render txt('搜尋工具...', 82, 17.500)}<kbd>alt</kbd><kbd>C</kbd></div>
      </div>

      <div class="split">
        <section class="tree">
          <div class="filter">
            <span class="fn">{@render icon('funnel', 20)}</span>
            <div class="input">{@render txt('根據名稱來篩選', 116, 16.500)}</div>
            {@render icon('list', 18)}
          </div>
          <div class="inst"><span>實例 <b>(29)</b></span>{@render icon('folder', 23)}</div>
          <div class="scrollbox">
            <div class="rows">
              <div class="row root">{@render icon('asm', 21)}{@render txt('Assembly 1', 85, 16.500)}</div>
              <div class="row org">{@render icon('origin', 10)}{@render txt('Origin', 44, 16.500)}</div>
              {#each parts as p, k}
                <div class="row">{@render icon('part', 20)}{@render txt(p, k < 9 ? 75 : 78, 16.500)}<span class="tri">{@render icon('tri', 19)}</span></div>
              {/each}
            </div>
            <div class="bar"><i class="up"></i><div class="thumb"></div><i class="dn"></i></div>
          </div>
        </section>

        <section class="view">
          <svg class="scene" viewBox="308 225 1612 688" width="1612" height="688">
            <defs>
              <radialGradient id="light" gradientUnits="userSpaceOnUse" cx="1610" cy="205" r="700">
                <stop offset="0" stop-color="#d8ffff" /><stop offset=".09" stop-color="#cef8ff" /><stop offset=".17" stop-color="#bfe6ff" />
                <stop offset=".29" stop-color="#a8cfe8" /><stop offset=".45" stop-color="#93b8d2" /><stop offset=".66" stop-color="#84aac4" /><stop offset="1" stop-color="#7da2bc" />
              </radialGradient>
              <filter id="shade" x="-50%" y="-50%" width="200%" height="200%"><feGaussianBlur stdDeviation="7" /></filter>
            </defs>
            <path d="M540 240H786V380H1442V240H1688V897H1442V757H786V897H540z" fill="url(#light)" stroke="#3c4a54" stroke-width="2" />
            <path d="M559 439.500h59v109h109.500v-109H786V716h-58.500V596.500H618V716h-59z" fill="#fff" stroke="#222" stroke-width="1.500" />
            {#each digits as d}
              <g transform="translate({d.dx} 0)">
                <g filter="url(#shade)" fill="#34505f" opacity=".65">
                  <path d="M816 407h104v22H816zM789 455h24v98h-24zM888 455h24v98h-24zM789 587h24v98h-24zM888 587h24v98h-24zM820 578h97v22h-97zM820 708h97v22h-97z" />
                </g>
                <g stroke="#1c2930" stroke-width="1.600" fill="#fff">
                  <path d="M818.500 429h99v16.500h-99zM811 453.500h16.300v98.800H811zM909.500 453.500h16.300v98.800h-16.300zM811 584.500h16.300v98.800H811zM909.500 584.500h16.300v98.800h-16.300zM818.500 691.500h99v16h-99z" />
                  <rect x="818.500" y="412.500" width="99" height="16.800" fill={d.c[0]} />
                  <rect x="794" y="453.500" width="17" height="98.800" fill={d.c[1]} />
                  <rect x="893" y="453.500" width="16.500" height="98.800" fill={d.c[2]} />
                  <rect x="794" y="584.500" width="17" height="98.800" fill={d.c[4]} />
                  <rect x="893" y="584.500" width="16.500" height="98.800" fill={d.c[5]} />
                  <rect x="818.500" y="560.500" width="99" height="16" />
                  <rect x="818.500" y="576.500" width="99" height="16.800" fill={d.c[3]} />
                  <rect x="818.500" y="707.700" width="99" height="17" fill={d.c[6]} />
                </g>
              </g>
            {/each}
            <circle cx="1359.700" cy="568.500" r="5.500" fill="#ddd" stroke="#111" stroke-width="1.700" /><circle cx="1359.700" cy="568.500" r="2" fill="#111" />
            <path d="M1459.700 450.300C1482 440.500 1508 435.300 1533 435.300C1612 435.300 1664.700 490 1664.700 568C1664.700 645 1617 694.700 1541 694.700C1510 694.700 1480 689.500 1455 682.300V559.300H1541V585.700H1484.500V663.300C1501 667.300 1519 669.300 1537 669.300C1597 669.300 1634 630 1634 567C1634 503 1596 461.300 1536 461.300C1513 461.300 1492 467 1470.700 476.300Z" fill="#fff" stroke="#222" stroke-width="1.500" />

            <g fill="#e1e9ef">
              <path d="M1807.500 243l9 12h-18zM1807.500 430l9-12h-18zM1714 336l12-9v18zM1901 336l-12-9v18z" />
              <path d="M1785 301h45q0 13 13 13v45q-13 0-13 13h-45q0-13-13-13v-45q13 0 13-13z" />
              <path d="M1740 285l2-15 4 4q16-15 35-21l2 6q-18 6-32 19l5 5zM1874.500 285l-2-15-4 4q-16-15-35-21l-2 6q18 6 32 19l-5 5z" />
            </g>
            <rect x="1780" y="309" width="55" height="55" rx="14" fill="#fff" />
            <path d="M1769.500 301v73" stroke="#3b35c9" stroke-width="1.700" /><path d="M1769.500 374.500h74" stroke="#e0262c" stroke-width="1.700" />
            <text x="1765" y="295" font-size="17" textLength="9" lengthAdjust="spacingAndGlyphs" fill="#3b35e0" font-weight="bold">Z</text>
            <text x="1851" y="381" font-size="17" textLength="9" lengthAdjust="spacingAndGlyphs" fill="#e0353a" font-weight="bold">X</text>
            <text x="1793" y="343" font-size="15" textLength="30" lengthAdjust="spacingAndGlyphs" fill="#222">前視</text>
            <g stroke="#333" stroke-width="1.300"><path d="M1850 412l10-4 11 4-11 4z" fill="#fff" /><path d="M1850 412l10 4v14l-10-5z" fill="#999" /><path d="M1871 412l-11 4v14l11-6z" fill="#ccc" /></g>
            <path d="M1885 417h10l-5 5z" fill="#222" />
          </svg>
          <div class="toggle">{@render icon('expand', 23)}</div>
          <div class="side">{#each ['r1', 'r2', 'r3', 'r4', 'r5'] as r}<div>{@render icon(r, 24)}</div>{/each}</div>
          <div class="measure">{@render icon('tape', 20)}{@render icon('scale', 19)}</div>
        </section>
      </div>

      <div class="sheets">
        <div class="add">{@render icon('plus', 20)}</div>
        <div class="sheet">{@render icon('studio', 23)}{@render txt('Part Studio 1', 99, 16.500)}</div>
        <div class="sheet on">{@render icon('asm', 24)}{@render txt('Assembly 1', 89, 16.500)}</div>
      </div>
    </div>
  </div>

  <div class="dl">
    {#each files as f}
      <div class="file">
        <span class="fi">{@render icon(f.i, 20)}</span>
        <div class="fname">{@render txt(f.t, f.w, 16)}{#if f.sub}<small>{@render txt(f.sub, 37, 12.500)}</small>{/if}</div>
        {@render icon('up', 14)}
      </div>
    {/each}
    <div class="all">{@render txt('全部顯示', 59, 14.500)}</div>
    <span class="dx">{@render icon('x', 17)}</span>
  </div>

  <footer class="task">
    <div class="wx">{@render icon('weather', 30)}<b>1</b></div>
    <div class="apps">
      {#each apps as a}
        <div class="app" class:run={a.run} class:on={a.on}>
          {@render icon(a.i, 29)}
          {#if a.blob}<i class="blob" style:background={a.blob}></i>{/if}
          {#if a.count}<b class="count">{a.count}</b>{/if}
          {#if a.label}<b class="lab">{a.label}</b>{/if}
          {#if a.num}<b class="num">{a.num}</b>{/if}
        </div>
      {/each}
    </div>
    <div class="tray">
      <span>{@render icon('up', 15)}</span><span>{@render icon('cloud', 21)}</span><span>{@render icon('mic', 21)}</span><span>{@render icon('keys', 21)}</span>
      <span>{@render txt('中', 18, 18)}</span><span class="zy">{@render txt('ㄅ', 18, 18)}</span>
      <span class="n">{@render icon('monitor', 21)}</span><span class="n">{@render icon('sound', 20)}</span><span class="n">{@render icon('batt', 20)}</span>
    </div>
    <div class="when">{@render txt('下午 11:29', 70, 14.500)}{@render txt('2023/5/7', 61, 14.500)}</div>
    <b class="note">27</b>
  </footer>
</div>

<style>
  :global(body) { background: #fff; overflow: hidden; }
  * { box-sizing: border-box; }
  .screen { width: 1920px; height: 1080px; display: flex; flex-direction: column; overflow: hidden; font-family: 'Noto Sans', 'Noto Sans CJK TC', sans-serif; color: #333; }
  .ic, .tx { flex: none; display: block; }
  .tx { overflow: visible; }
  .tx text { fill: currentColor; }

  .chrome { height: 129px; flex: none; position: relative; border-bottom: 1px solid #f585c8; }
  .paper { position: absolute; left: 0; top: 0; }
  .strip { height: 43px; display: flex; padding-left: 10px; position: relative; }
  .tab { width: 175.100px; flex: none; display: flex; align-items: center; background: #ff0090; color: #fff; padding-left: 15px; border-radius: 9px 9px 0 0; position: relative; }
  .tab.active { background: #b0bfd4; color: #f0058e; }
  .tab.line::after { content: ''; position: absolute; right: 0; top: 9px; height: 26px; width: 1px; background: #ffb3dc; }
  .title { width: 98px; margin: 2px 6px 0 10px; font-weight: 300; }
  .title.short { width: 68px; }
  .fade { mask-image: linear-gradient(90deg, #000 72%, #0000); }
  .audio { margin: 0 12px 0 6px; }
  .new { width: 35px; height: 35px; border-radius: 50%; background: #ff0090; color: #fff; display: grid; place-items: center; margin: 4px 0 0 8px; }
  .new + .wb { margin-left: auto; }
  .wb { display: flex; gap: 1px; width: 229px; height: 36px; }
  .wb div { flex: 1; background: #ffeef8; display: grid; place-items: center; }
  .nav { height: 45px; display: flex; align-items: center; position: relative; }
  .navbtns { display: flex; width: 175px; padding-left: 7.500px; color: #d4007f; }
  .navbtns span { width: 40px; display: grid; place-items: center; }
  .navbtns .dim { color: #e25eac; }
  .pill { width: 1330px; height: 35px; border-radius: 18px; background: #fdc6e6; display: flex; align-items: center; padding: 0 13px; }
  .url { display: flex; color: #5e5660; margin-left: 13px; font-weight: 300; }
  .url b { color: #1d1a20; font-weight: 300; }
  .pillic { display: flex; gap: 19.700px; margin-left: auto; }
  .ext { display: flex; padding-left: 7.500px; color: #c80078; }
  .ext span { width: 40px; display: grid; place-items: center; position: relative; }
  .ext em { width: 28px; height: 28px; border-radius: 50%; background: #000; }
  .cnt i { position: absolute; left: 19px; top: 12px; width: 20px; height: 15px; border-radius: 2px; background: #f1433c; color: #222; font: 13px/15px 'Noto Sans', sans-serif; text-align: center; }
  .marks { height: 40px; display: flex; align-items: center; gap: 20.800px; padding: 0 0 3px 17.500px; color: #ee0090; position: relative; font-weight: 300; }
  .mark { display: flex; align-items: center; gap: 10px; }
  .mark .tx { margin-top: 1px; }

  .apphead { height: 51px; flex: none; background: #f8f9fb; display: flex; align-items: center; }
  .brand { display: flex; align-items: center; gap: 8px; width: 140px; padding-left: 4px; color: #666; }
  .onshape { font-family: Lato, sans-serif; margin-top: -2px; }
  .burger { width: 34px; display: flex; flex-direction: column; gap: 4px; }
  .burger i { width: 21px; height: 4px; background: #333; }
  .doc { width: 383px; font-weight: 700; color: #2e2e2e; font-family: 'Open Sans', 'Noto Sans CJK TC', sans-serif; margin-top: -2px; }
  .main { width: 62px; color: #777; font-family: Roboto, sans-serif; padding-top: 4px; }
  .lnk { width: 68px; }
  .capi { margin-top: -2px; }
  .right { margin-left: auto; display: flex; align-items: center; height: 51px; padding-bottom: 4px; font-weight: 300; }
  .bell { width: 36px; position: relative; padding-top: 7px; }
  .bell b { position: absolute; left: 11px; top: -8px; width: 20px; height: 20px; border-radius: 3px; background: #1651b0; color: #fff; font: 700 14px/20px 'Open Sans', sans-serif; text-align: center; }
  .btn { height: 42px; border: 1px solid #ccc; border-radius: 5px; background: #fff; display: grid; place-items: center; margin-right: 10px; }
  .b1 { width: 133px; } .b2 { width: 99px; }
  .b3 { width: 63px; background: #1651b0; border-color: #1651b0; color: #fff; margin-right: 12px; }
  .help { display: flex; align-items: center; gap: 8px; width: 55px; padding-top: 7px; }
  .me { display: flex; align-items: center; gap: 8px; width: 118px; padding-top: 5px; }

  .body { height: 771px; flex: none; display: flex; }
  .rail { width: 50px; background: #fafafa; border-right: 1px solid #d6d6d6; display: flex; flex-direction: column; align-items: center; }
  .rail div { height: 44px; display: grid; place-items: center; }
  .rail .last { margin-top: auto; height: 34px; }
  .work { flex: 1; min-width: 0; display: flex; flex-direction: column; font-family: Roboto, 'Noto Sans CJK TC', sans-serif; }
  .tools { height: 44px; flex: none; display: flex; align-items: center; }
  .tools hr { width: 2px; height: 35px; border: 0; margin: 0 .9px; background: #dcdcdc; flex: none; }
  .tools hr.wide { margin: 0 2px; }
  .cell { width: 42.500px; display: grid; place-items: center; flex: none; }
  .cell.s { width: 44.500px; }
  .cell.redo { margin-left: 1.500px; }
  .ins { display: flex; align-items: center; gap: 7px; width: 88.700px; padding-left: 11px; font-weight: 300; }
  .find { margin-left: 14px; width: 157px; height: 40px; background: #efefef; border-radius: 4px; display: flex; align-items: center; padding-left: 12px; font-weight: 300; }
  kbd { font: 16px/23px Roboto, sans-serif; border: 1px solid #bbb; border-radius: 2px; height: 25px; width: 23px; text-align: center; background: #f4f4f4; letter-spacing: -.3px; }
  .find .tx + kbd { margin-left: 6px; margin-right: 1px; }
  kbd:last-child { width: 20px; }
  .split { flex: 1; display: flex; min-height: 0; }
  .tree { width: 258px; border-right: 2px solid #ccc; border-top: 1px solid #ccc; display: flex; flex-direction: column; border-bottom: 1px solid #ccc; }
  .filter { display: flex; align-items: center; height: 55px; }
  .fn { width: 49px; padding-left: 13px; }
  .input { width: 151px; height: 36px; border: 1px solid #bbb; border-top: 2px solid #aaa; border-radius: 3px; display: flex; align-items: center; padding-left: 6px; margin-right: 19px; color: #888; font-style: italic; font-weight: 300; }
  .inst { height: 31px; padding: 0 14px 0 6px; display: flex; align-items: center; justify-content: space-between; font-size: 16px; line-height: 22px; }
  .inst span { margin-top: -11px; letter-spacing: -.2px; font-weight: 300; }
  .inst b { font-weight: 700; }
  .inst .ic { margin-top: -5px; }
  .scrollbox { flex: 1; min-height: 0; display: flex; }
  .rows { width: 229px; overflow: hidden; color: #444; }
  .row { height: 32.500px; display: flex; align-items: center; padding: 0 65px 0 32px; gap: 6px; }
  .row.root { padding-left: 6px; }
  .row.org { padding-left: 37px; gap: 10px; }
  .tri { margin-left: auto; }
  .row .tx { margin-right: -6px; }
  .bar { width: 21px; background: #f1f1f1; display: flex; flex-direction: column; align-items: center; }
  .thumb { width: 17px; height: 320px; background: #c1c1c1; }
  .bar i { border: 5px solid #0000; border-top: 0; border-bottom: 6px solid #999; margin: 8px 0 7px; }
  .bar .dn { border-top: 6px solid #444; border-bottom: 0; margin: auto 0 9px; }
  .view { flex: 1; position: relative; min-width: 0; }
  .scene { display: block; font-family: Roboto, 'Noto Sans CJK TC', sans-serif; margin-top: 1px; }
  .toggle { position: absolute; left: -2px; top: 313px; width: 42px; height: 42px; background: #fff; border: 1px solid #ccc; border-left: 0; display: grid; place-items: center; }
  .side { position: absolute; right: 0; top: 230px; width: 40px; border: solid #ccc; border-width: 1px 0 0 1px; background: #fff; }
  .side div { height: 41.300px; border-bottom: 1px solid #ccc; display: grid; place-items: center; }
  .side div:nth-child(2) .ic { margin-top: 3px; }
  .measure { position: absolute; right: 15px; bottom: 9px; display: flex; gap: 25px; }
  .sheets { height: 38px; flex: none; background: #d0d0d0; border-bottom: 1px solid #fff; display: flex; }
  .add { width: 49px; padding: 8px 0 0 11px; color: #555; }
  .sheet { width: 250px; height: 34px; background: #e8e8e8; border-radius: 0 0 6px 6px; box-shadow: 0 1px 1px #aaa; display: flex; align-items: center; gap: 4px; padding-left: 14px; color: #666; margin-right: 2px; }
  .sheet .tx { margin-top: 3px; }
  .sheet.on { background: #fff; height: 35px; border-bottom: 3px solid #1651b0; color: #333; box-shadow: none; padding-left: 13px; }
  .sheet.on .tx { margin-top: 5px; }

  .dl { height: 69px; flex: none; background: #fca2d4; display: flex; align-items: center; padding-left: 4px; border-bottom: 1px solid #bba9b3; color: #5b3a52; font-weight: 300; }
  .file { width: 291.500px; height: 54px; border-right: 1px solid #ec5fb0; display: flex; align-items: center; padding: 0 22px 0 21px; }
  .file:nth-child(2) { width: 293px; padding-left: 20px; }
  .file > .ic { color: #d1007e; }
  .fi { margin-right: 17px; }
  .fname { flex: 1; }
  .fname small { display: block; margin-top: 5px; }
  .all { width: 100px; height: 40px; border: 1px solid #e8cfe0; border-radius: 5px; display: grid; place-items: center; margin-left: 20px; color: #3a1a30; }
  .dx { margin-left: 13px; color: #d1007e; }

  .task { height: 60px; flex: none; display: flex; align-items: center; position: relative; background: linear-gradient(90deg, #fce8e5 0, #fbe9e6 20%, #f4f1ef 30%, #f3f1ee 70%, #eee6e0 75%, #f4e4d9 78%, #e2dfdd 82%, #e6e1de 84%, #f8e4da 88%, #fce9e7 91%, #fbe8e8 100%); }
  .wx { width: 202.500px; padding-left: 13px; position: relative; }
  .wx b { position: absolute; left: 27px; top: -7px; width: 20px; height: 20px; border-radius: 50%; background: #c42b1c; color: #fff; font: 13px/20px 'Noto Sans', sans-serif; text-align: center; }
  .apps { display: flex; }
  .app { width: 55.100px; height: 60px; display: grid; place-items: center; position: relative; }
  .app .ic { z-index: 1; }
  .app.run::after { content: ''; position: absolute; bottom: 6px; left: 24px; width: 8px; height: 4px; border-radius: 2px; background: #888; }
  .app.on::before { content: ''; position: absolute; left: 4px; top: 6px; width: 48px; height: 48px; border-radius: 5px; background: #fcfaf9; border: 1px solid #e6e2e0; }
  .app.on::after { content: ''; position: absolute; bottom: 6px; left: 18px; width: 20px; height: 4px; border-radius: 2px; background: #5878bc; }
  .blob { position: absolute; z-index: 2; left: 29px; top: 9px; width: 20px; height: 20px; border-radius: 50%; }
  .app:last-child .blob { width: 15px; height: 15px; left: 31px; top: 12px; }
  .count { position: absolute; z-index: 2; left: 30px; top: 9px; width: 18px; height: 18px; border-radius: 50%; background: #ef5350; color: #fff; font: 700 12px/17px 'Noto Sans', sans-serif; text-align: center; }
  .lab, .num { position: absolute; z-index: 2; font: 900 8px/10px 'Noto Sans', sans-serif; color: #06c755; left: 18px; top: 23px; width: 20px; text-align: center; letter-spacing: -.3px; }
  .num { color: #fff; font-size: 9px; left: 26px; top: 32px; font-weight: 400; }
  .tray { display: flex; margin-left: 15px; width: 355px; color: #222; flex: none; font-weight: 300; }
  .tray span { width: 40px; height: 26px; display: grid; place-items: center; flex: none; }
  .tray .zy { width: 57px; }
  .tray .n { width: 30px; }
  .tray .n:nth-child(7) { margin-left: 3px; }
  .when { width: 80px; flex: none; display: flex; flex-direction: column; align-items: flex-end; color: #222; font-weight: 300; }
  .note { width: 23px; height: 23px; border-radius: 50%; background: #45599b; color: #fff; font: 12px/23px 'Noto Sans', sans-serif; text-align: center; margin-left: 8px; }
</style>
